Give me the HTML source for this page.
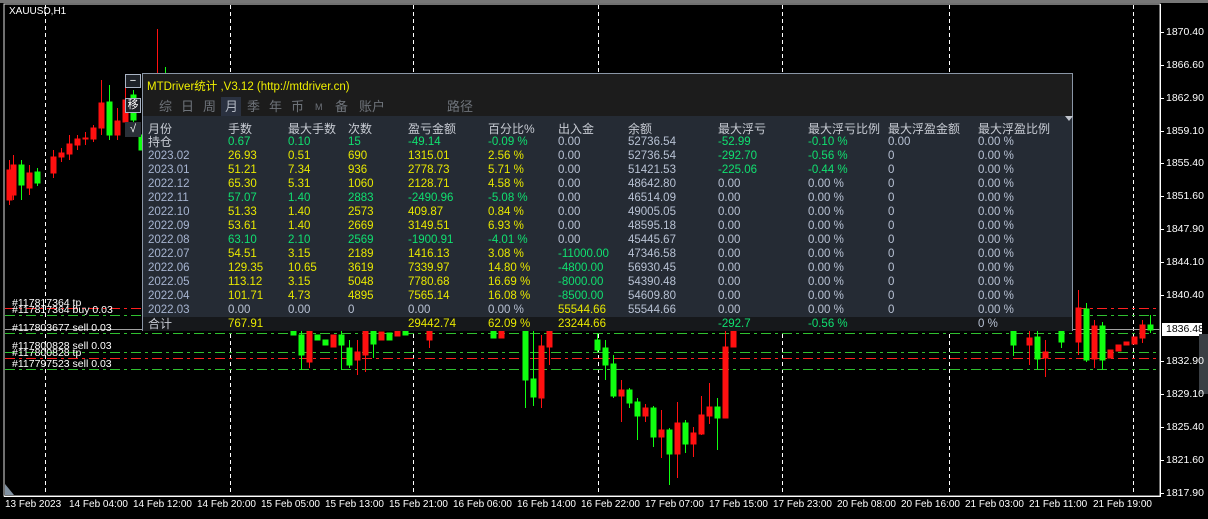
<!DOCTYPE html>
<html><head><meta charset="utf-8">
<style>
*{margin:0;padding:0;box-sizing:border-box}
body{width:1208px;height:519px;background:#000;overflow:hidden;position:relative;font-family:"Liberation Sans","Noto Sans CJK SC",sans-serif}
.a{position:absolute;white-space:nowrap}
.pl{position:absolute;left:1166px;font-size:10.5px;color:#fff;line-height:12px}
.tl{position:absolute;top:499px;font-size:10px;color:#fff;line-height:12px}
.ord{position:absolute;left:12px;font-size:10.5px;color:#fff;line-height:10px}
#panel{position:absolute;left:142px;top:73px;width:931px;height:258px;background:#1c1c1c;border:1px solid #8a96a6}
.r{position:absolute;left:0;width:929px;height:14px;font-size:11.5px;line-height:14px}
.r span{position:absolute;top:0}
.t{position:absolute;top:24px;font-size:13px;color:#6e737a;line-height:18px}
.y{color:#e8e800}.g{color:#10e070}.w{color:#b8c2d4}.m{color:#a6b4d0}.h{color:#c8ccd4}
</style></head><body>
<svg class="a" style="left:0;top:0" width="1208" height="519">
<rect x="4" y="4" width="1156" height="492" fill="none" stroke="#e0e0e0" stroke-width="1"/>
<rect x="0" y="0" width="1208" height="3" fill="#777"/>
<g stroke="#fff" stroke-dasharray="4,3" stroke-width="1">
<line x1="45.5" y1="5" x2="45.5" y2="495"/><line x1="230.5" y1="5" x2="230.5" y2="495"/>
<line x1="413.5" y1="5" x2="413.5" y2="495"/><line x1="598.5" y1="5" x2="598.5" y2="495"/>
<line x1="782.5" y1="5" x2="782.5" y2="495"/><line x1="949.5" y1="5" x2="949.5" y2="495"/>
<line x1="1133.5" y1="5" x2="1133.5" y2="495"/></g>
<g stroke-dasharray="10,4,3,4" stroke-width="1">
<line x1="5" y1="308.5" x2="1160" y2="308.5" stroke="#ff2020"/>
<line x1="5" y1="315.5" x2="1160" y2="315.5" stroke="#30c030"/>
<line x1="5" y1="333.5" x2="1160" y2="333.5" stroke="#30c030"/>
<line x1="5" y1="352.5" x2="1160" y2="352.5" stroke="#30c030"/>
<line x1="5" y1="358.5" x2="1160" y2="358.5" stroke="#ff2020"/>
<line x1="5" y1="369.5" x2="1160" y2="369.5" stroke="#30c030"/></g>
<line x1="5" y1="329.5" x2="1160" y2="329.5" stroke="#a0a0a0"/>
<g stroke-width="1">
<g fill="#ff1010" stroke="#ff1010">
<line x1="9.5" y1="160" x2="9.5" y2="205"/><rect x="7" y="170" width="5" height="30"/>
<line x1="13.5" y1="155" x2="13.5" y2="200"/><rect x="11" y="165" width="5" height="30"/>
<line x1="29.5" y1="165" x2="29.5" y2="195"/><rect x="27" y="173" width="5" height="15"/>
<line x1="53.5" y1="150" x2="53.5" y2="178"/><rect x="51" y="157" width="5" height="16"/>
<line x1="61.5" y1="148" x2="61.5" y2="162"/><rect x="59" y="153" width="5" height="4"/>
<line x1="69.5" y1="135" x2="69.5" y2="160"/><rect x="67" y="144" width="5" height="10"/>
<line x1="77.5" y1="135" x2="77.5" y2="150"/><rect x="75" y="139" width="5" height="6"/>
<line x1="85.5" y1="132" x2="85.5" y2="145"/><rect x="83" y="138" width="5" height="1"/>
<line x1="93.5" y1="125" x2="93.5" y2="142"/><rect x="91" y="128" width="5" height="11"/>
<line x1="101.5" y1="80" x2="101.5" y2="135"/><rect x="99" y="103" width="5" height="25"/>
<line x1="117.5" y1="108" x2="117.5" y2="140"/><rect x="115" y="121" width="5" height="14"/>
<line x1="125.5" y1="88" x2="125.5" y2="125"/><rect x="123" y="100" width="5" height="22"/>
<line x1="157.5" y1="29" x2="157.5" y2="75"/>
<rect x="307" y="330" width="5" height="32"/><line x1="309.5" y1="330" x2="309.5" y2="368"/>
<rect x="331" y="335" width="5" height="12"/><rect x="355" y="352" width="5" height="8"/><line x1="357.5" y1="340" x2="357.5" y2="375"/>
<rect x="363" y="330" width="5" height="25"/><line x1="365.5" y1="330" x2="365.5" y2="372"/>
<rect x="379" y="332" width="5" height="8"/><rect x="395" y="330" width="5" height="6"/>
<rect x="427" y="330" width="5" height="10"/><line x1="429.5" y1="330" x2="429.5" y2="348"/>
<rect x="499" y="330" width="5" height="8"/>
<rect x="539" y="346" width="5" height="52"/><line x1="541.5" y1="335" x2="541.5" y2="408"/>
<rect x="547" y="330" width="5" height="17"/><line x1="549.5" y1="330" x2="549.5" y2="365"/>
<rect x="619" y="390" width="5" height="6"/><line x1="621.5" y1="380" x2="621.5" y2="422"/>
<rect x="643" y="408" width="5" height="8"/><line x1="645.5" y1="404" x2="645.5" y2="422"/>
<rect x="659" y="430" width="5" height="7"/><line x1="661.5" y1="410" x2="661.5" y2="458"/>
<rect x="675" y="423" width="5" height="31"/><line x1="677.5" y1="402" x2="677.5" y2="478"/>
<rect x="691" y="433" width="5" height="11"/><line x1="693.5" y1="427" x2="693.5" y2="457"/>
<rect x="699" y="415" width="5" height="19"/><line x1="701.5" y1="396" x2="701.5" y2="435"/>
<rect x="707" y="407" width="5" height="9"/><line x1="709.5" y1="383" x2="709.5" y2="424"/>
<rect x="723" y="347" width="5" height="71"/><line x1="725.5" y1="330" x2="725.5" y2="418"/>
<rect x="731" y="330" width="5" height="17"/>
<rect x="1027" y="338" width="5" height="7"/><line x1="1029.5" y1="330" x2="1029.5" y2="365"/>
<rect x="1043" y="352" width="5" height="6"/><line x1="1045.5" y1="340" x2="1045.5" y2="377"/>
<rect x="1076" y="308" width="5" height="34"/><line x1="1078.5" y1="290" x2="1078.5" y2="355"/>
<rect x="1092" y="326" width="5" height="33"/><line x1="1094.5" y1="320" x2="1094.5" y2="368"/>
<rect x="1108" y="350" width="5" height="8"/><rect x="1116" y="345" width="5" height="6"/>
<rect x="1124" y="342" width="5" height="3"/><rect x="1132" y="337" width="5" height="7"/>
<rect x="1140" y="325" width="5" height="13"/><line x1="1142.5" y1="320" x2="1142.5" y2="343"/>
</g>
<g fill="#10ff10" stroke="#10ff10">
<line x1="21.5" y1="160" x2="21.5" y2="200"/><rect x="19" y="165" width="5" height="20"/>
<line x1="37.5" y1="168" x2="37.5" y2="186"/><rect x="35" y="172" width="5" height="11"/>
<line x1="109.5" y1="85" x2="109.5" y2="140"/><rect x="107" y="102" width="5" height="33"/>
<line x1="133.5" y1="90" x2="133.5" y2="125"/><rect x="131" y="95" width="5" height="25"/>
<rect x="139" y="135" width="3" height="15"/>
<line x1="165.5" y1="67" x2="165.5" y2="73"/>
<rect x="291" y="330" width="5" height="5"/><rect x="299" y="335" width="5" height="20"/><line x1="301.5" y1="330" x2="301.5" y2="370"/>
<rect x="315" y="335" width="5" height="5"/><rect x="323" y="340" width="5" height="5"/>
<rect x="339" y="335" width="5" height="10"/><line x1="341.5" y1="330" x2="341.5" y2="370"/>
<rect x="347" y="348" width="5" height="17"/><line x1="349.5" y1="340" x2="349.5" y2="368"/>
<rect x="371" y="330" width="5" height="14"/><line x1="373.5" y1="330" x2="373.5" y2="358"/>
<rect x="387" y="333" width="5" height="7"/><rect x="403" y="330" width="5" height="5"/>
<rect x="491" y="330" width="5" height="8"/>
<rect x="523" y="330" width="5" height="50"/><line x1="525.5" y1="330" x2="525.5" y2="408"/>
<rect x="531" y="379" width="5" height="18"/><line x1="533.5" y1="330" x2="533.5" y2="406"/>
<rect x="595" y="340" width="5" height="10"/><line x1="597.5" y1="333" x2="597.5" y2="352"/>
<rect x="603" y="348" width="5" height="17"/><line x1="605.5" y1="340" x2="605.5" y2="380"/>
<rect x="611" y="364" width="5" height="32"/><line x1="613.5" y1="355" x2="613.5" y2="398"/>
<rect x="627" y="390" width="5" height="13"/><line x1="629.5" y1="388" x2="629.5" y2="408"/>
<rect x="635" y="402" width="5" height="14"/><line x1="637.5" y1="398" x2="637.5" y2="440"/>
<rect x="651" y="408" width="5" height="29"/><line x1="653.5" y1="406" x2="653.5" y2="447"/>
<rect x="667" y="430" width="5" height="24"/><line x1="669.5" y1="428" x2="669.5" y2="485"/>
<rect x="683" y="423" width="5" height="21"/><line x1="685.5" y1="420" x2="685.5" y2="453"/>
<rect x="715" y="407" width="5" height="11"/><line x1="717.5" y1="398" x2="717.5" y2="450"/>
<rect x="1011" y="330" width="5" height="15"/><line x1="1013.5" y1="330" x2="1013.5" y2="356"/>
<rect x="1035" y="337" width="5" height="22"/><line x1="1037.5" y1="330" x2="1037.5" y2="369"/>
<rect x="1059" y="330" width="5" height="12"/><line x1="1061.5" y1="330" x2="1061.5" y2="348"/>
<rect x="1084" y="309" width="5" height="51"/><line x1="1086.5" y1="303" x2="1086.5" y2="362"/>
<rect x="1100" y="326" width="5" height="34"/><line x1="1102.5" y1="322" x2="1102.5" y2="370"/>
<rect x="1148" y="325" width="5" height="5"/><line x1="1150.5" y1="315" x2="1150.5" y2="333"/>
</g></g>
<line x1="1160.5" y1="4" x2="1160.5" y2="497" stroke="#fff"/>
<line x1="4" y1="496.5" x2="1161" y2="496.5" stroke="#fff"/>
<g stroke="#fff">
<line x1="1161" y1="32.5" x2="1164" y2="32.5"/><line x1="1161" y1="65.5" x2="1164" y2="65.5"/><line x1="1161" y1="98.5" x2="1164" y2="98.5"/><line x1="1161" y1="131.5" x2="1164" y2="131.5"/><line x1="1161" y1="163.5" x2="1164" y2="163.5"/><line x1="1161" y1="196.5" x2="1164" y2="196.5"/><line x1="1161" y1="229.5" x2="1164" y2="229.5"/><line x1="1161" y1="262.5" x2="1164" y2="262.5"/><line x1="1161" y1="295.5" x2="1164" y2="295.5"/><line x1="1161" y1="361.5" x2="1164" y2="361.5"/><line x1="1161" y1="394.5" x2="1164" y2="394.5"/><line x1="1161" y1="427.5" x2="1164" y2="427.5"/><line x1="1161" y1="460.5" x2="1164" y2="460.5"/><line x1="1161" y1="493.5" x2="1164" y2="493.5"/>
</g>
<rect x="1162" y="323" width="40" height="13" fill="#fff"/>
<rect x="1199" y="334" width="9" height="60" fill="#3a3f44"/>
<polygon points="5,484 5,495 14,495" fill="#8090a0"/>
</svg>
<div class="a" style="left:9px;top:6px;font-size:10px;color:#fff">XAUUSD,H1</div>
<div class="pl" style="top:26px">1870.40</div><div class="pl" style="top:59px">1866.60</div><div class="pl" style="top:92px">1862.90</div><div class="pl" style="top:125px">1859.10</div><div class="pl" style="top:157px">1855.40</div><div class="pl" style="top:190px">1851.60</div><div class="pl" style="top:223px">1847.90</div><div class="pl" style="top:256px">1844.10</div><div class="pl" style="top:289px">1840.40</div><div class="pl" style="top:323px;color:#000">1836.48</div><div class="pl" style="top:355px">1832.90</div><div class="pl" style="top:388px">1829.10</div><div class="pl" style="top:421px">1825.40</div><div class="pl" style="top:454px">1821.60</div><div class="pl" style="top:487px">1817.90</div>
<div class="tl" style="left:5px">13 Feb 2023</div><div class="tl" style="left:69px">14 Feb 04:00</div><div class="tl" style="left:133px">14 Feb 12:00</div><div class="tl" style="left:197px">14 Feb 20:00</div><div class="tl" style="left:261px">15 Feb 05:00</div><div class="tl" style="left:325px">15 Feb 13:00</div><div class="tl" style="left:389px">15 Feb 21:00</div><div class="tl" style="left:453px">16 Feb 06:00</div><div class="tl" style="left:517px">16 Feb 14:00</div><div class="tl" style="left:581px">16 Feb 22:00</div><div class="tl" style="left:645px">17 Feb 07:00</div><div class="tl" style="left:709px">17 Feb 15:00</div><div class="tl" style="left:773px">17 Feb 23:00</div><div class="tl" style="left:837px">20 Feb 08:00</div><div class="tl" style="left:901px">20 Feb 16:00</div><div class="tl" style="left:965px">21 Feb 03:00</div><div class="tl" style="left:1029px">21 Feb 11:00</div><div class="tl" style="left:1093px">21 Feb 19:00</div>
<div class="ord" style="top:298px">#117817364 tp</div><div class="ord" style="top:305px">#117817364 buy 0.03</div><div class="ord" style="top:323px">#117803677 sell 0.03</div><div class="ord" style="top:341px">#117800828 sell 0.03</div><div class="ord" style="top:348px">#117800828 tp</div><div class="ord" style="top:359px">#117797523 sell 0.03</div>
<div class="a" style="left:125px;top:74px;width:16px;height:14px;border:1px solid #aab4c4;background:#1e2228;color:#fff;font-size:11px;line-height:12px;text-align:center">−</div>
<div class="a" style="left:125px;top:98px;width:16px;height:15px;border:1px solid #aab4c4;background:#1e2228;color:#fff;font-size:11px;line-height:13px;text-align:center">移</div>
<div class="a" style="left:125px;top:122px;width:16px;height:15px;background:#2a3038;color:#fff;font-size:11px;line-height:15px;text-align:center">√</div>
<div id="panel">
<div class="a" style="left:4px;top:4px;font-size:11.5px;color:#f0f000">MTDriver统计 ,V3.12 (http://mtdriver.cn)</div>
<div class="a" style="left:78px;top:23px;width:20px;height:20px;background:#2a3140"></div>
<span class="t" style="left:16px">综</span><span class="t" style="left:38px">日</span><span class="t" style="left:60px">周</span><span class="t" style="left:82px;color:#b0b6c0">月</span><span class="t" style="left:104px">季</span><span class="t" style="left:126px">年</span><span class="t" style="left:148px">币</span><span class="t" style="left:172px;font-size:9px">M</span><span class="t" style="left:192px">备</span><span class="t" style="left:216px">账户</span><span class="t" style="left:304px">路径</span>
<div class="a" style="left:0;top:42px;width:929px;height:201px;background:#252b34"></div>
<div class="a" style="left:0;top:243px;width:929px;height:14px;background:#16181b"></div>
<div class="a" style="left:922px;top:42px;width:0;height:0;border-left:4px solid transparent;border-right:4px solid transparent;border-top:5px solid #c0c4cc"></div>
<div class="r h" style="top:48px;font-size:12px"><span style="left:5px">月份</span><span style="left:85px">手数</span><span style="left:145px">最大手数</span><span style="left:205px">次数</span><span style="left:265px">盈亏金额</span><span style="left:345px">百分比%</span><span style="left:415px">出入金</span><span style="left:485px">余额</span><span style="left:575px">最大浮亏</span><span style="left:665px">最大浮亏比例</span><span style="left:745px">最大浮盈金额</span><span style="left:835px">最大浮盈比例</span></div>
<div class="r g" style="top:61px"><span class="h" style="left:5px;font-size:12px">持仓</span><span style="left:85px">0.67</span><span style="left:145px">0.10</span><span style="left:205px">15</span><span style="left:265px">-49.14</span><span style="left:345px">-0.09 %</span><span class="w" style="left:415px">0.00</span><span class="w" style="left:485px">52736.54</span><span style="left:575px">-52.99</span><span style="left:665px">-0.10 %</span><span class="w" style="left:745px">0.00</span><span class="w" style="left:835px">0.00 %</span></div>
<div class="r y" style="top:75px"><span class="m" style="left:5px">2023.02</span><span style="left:85px">26.93</span><span style="left:145px">0.51</span><span style="left:205px">690</span><span style="left:265px">1315.01</span><span style="left:345px">2.56 %</span><span class="w" style="left:415px">0.00</span><span class="w" style="left:485px">52736.54</span><span class="g" style="left:575px">-292.70</span><span class="g" style="left:665px">-0.56 %</span><span class="w" style="left:745px">0</span><span class="w" style="left:835px">0.00 %</span></div>
<div class="r y" style="top:89px"><span class="m" style="left:5px">2023.01</span><span style="left:85px">51.21</span><span style="left:145px">7.34</span><span style="left:205px">936</span><span style="left:265px">2778.73</span><span style="left:345px">5.71 %</span><span class="w" style="left:415px">0.00</span><span class="w" style="left:485px">51421.53</span><span class="g" style="left:575px">-225.06</span><span class="g" style="left:665px">-0.44 %</span><span class="w" style="left:745px">0</span><span class="w" style="left:835px">0.00 %</span></div>
<div class="r y" style="top:103px"><span class="m" style="left:5px">2022.12</span><span style="left:85px">65.30</span><span style="left:145px">5.31</span><span style="left:205px">1060</span><span style="left:265px">2128.71</span><span style="left:345px">4.58 %</span><span class="w" style="left:415px">0.00</span><span class="w" style="left:485px">48642.80</span><span class="w" style="left:575px">0.00</span><span class="w" style="left:665px">0.00 %</span><span class="w" style="left:745px">0</span><span class="w" style="left:835px">0.00 %</span></div>
<div class="r g" style="top:117px"><span class="m" style="left:5px">2022.11</span><span style="left:85px">57.07</span><span style="left:145px">1.40</span><span style="left:205px">2883</span><span style="left:265px">-2490.96</span><span style="left:345px">-5.08 %</span><span class="w" style="left:415px">0.00</span><span class="w" style="left:485px">46514.09</span><span class="w" style="left:575px">0.00</span><span class="w" style="left:665px">0.00 %</span><span class="w" style="left:745px">0</span><span class="w" style="left:835px">0.00 %</span></div>
<div class="r y" style="top:131px"><span class="m" style="left:5px">2022.10</span><span style="left:85px">51.33</span><span style="left:145px">1.40</span><span style="left:205px">2573</span><span style="left:265px">409.87</span><span style="left:345px">0.84 %</span><span class="w" style="left:415px">0.00</span><span class="w" style="left:485px">49005.05</span><span class="w" style="left:575px">0.00</span><span class="w" style="left:665px">0.00 %</span><span class="w" style="left:745px">0</span><span class="w" style="left:835px">0.00 %</span></div>
<div class="r y" style="top:145px"><span class="m" style="left:5px">2022.09</span><span style="left:85px">53.61</span><span style="left:145px">1.40</span><span style="left:205px">2669</span><span style="left:265px">3149.51</span><span style="left:345px">6.93 %</span><span class="w" style="left:415px">0.00</span><span class="w" style="left:485px">48595.18</span><span class="w" style="left:575px">0.00</span><span class="w" style="left:665px">0.00 %</span><span class="w" style="left:745px">0</span><span class="w" style="left:835px">0.00 %</span></div>
<div class="r g" style="top:159px"><span class="m" style="left:5px">2022.08</span><span style="left:85px">63.10</span><span style="left:145px">2.10</span><span style="left:205px">2569</span><span style="left:265px">-1900.91</span><span style="left:345px">-4.01 %</span><span class="w" style="left:415px">0.00</span><span class="w" style="left:485px">45445.67</span><span class="w" style="left:575px">0.00</span><span class="w" style="left:665px">0.00 %</span><span class="w" style="left:745px">0</span><span class="w" style="left:835px">0.00 %</span></div>
<div class="r y" style="top:173px"><span class="m" style="left:5px">2022.07</span><span style="left:85px">54.51</span><span style="left:145px">3.15</span><span style="left:205px">2189</span><span style="left:265px">1416.13</span><span style="left:345px">3.08 %</span><span class="g" style="left:415px">-11000.00</span><span class="w" style="left:485px">47346.58</span><span class="w" style="left:575px">0.00</span><span class="w" style="left:665px">0.00 %</span><span class="w" style="left:745px">0</span><span class="w" style="left:835px">0.00 %</span></div>
<div class="r y" style="top:187px"><span class="m" style="left:5px">2022.06</span><span style="left:85px">129.35</span><span style="left:145px">10.65</span><span style="left:205px">3619</span><span style="left:265px">7339.97</span><span style="left:345px">14.80 %</span><span class="g" style="left:415px">-4800.00</span><span class="w" style="left:485px">56930.45</span><span class="w" style="left:575px">0.00</span><span class="w" style="left:665px">0.00 %</span><span class="w" style="left:745px">0</span><span class="w" style="left:835px">0.00 %</span></div>
<div class="r y" style="top:201px"><span class="m" style="left:5px">2022.05</span><span style="left:85px">113.12</span><span style="left:145px">3.15</span><span style="left:205px">5048</span><span style="left:265px">7780.68</span><span style="left:345px">16.69 %</span><span class="g" style="left:415px">-8000.00</span><span class="w" style="left:485px">54390.48</span><span class="w" style="left:575px">0.00</span><span class="w" style="left:665px">0.00 %</span><span class="w" style="left:745px">0</span><span class="w" style="left:835px">0.00 %</span></div>
<div class="r y" style="top:215px"><span class="m" style="left:5px">2022.04</span><span style="left:85px">101.71</span><span style="left:145px">4.73</span><span style="left:205px">4895</span><span style="left:265px">7565.14</span><span style="left:345px">16.08 %</span><span class="g" style="left:415px">-8500.00</span><span class="w" style="left:485px">54609.80</span><span class="w" style="left:575px">0.00</span><span class="w" style="left:665px">0.00 %</span><span class="w" style="left:745px">0</span><span class="w" style="left:835px">0.00 %</span></div>
<div class="r w" style="top:229px"><span class="m" style="left:5px">2022.03</span><span style="left:85px">0.00</span><span style="left:145px">0.00</span><span style="left:205px">0</span><span style="left:265px">0.00</span><span style="left:345px">0.00 %</span><span class="y" style="left:415px">55544.66</span><span style="left:485px">55544.66</span><span style="left:575px">0.00</span><span style="left:665px">0.00 %</span><span style="left:745px">0</span><span style="left:835px">0.00 %</span></div>
<div class="r y" style="top:243px"><span class="h" style="left:5px;font-size:12px">合计</span><span style="left:85px">767.91</span><span style="left:265px">29442.74</span><span style="left:345px">62.09 %</span><span style="left:415px">23244.66</span><span class="g" style="left:575px">-292.7</span><span class="g" style="left:665px">-0.56 %</span><span class="w" style="left:835px">0 %</span></div>
</div>
</body></html>
